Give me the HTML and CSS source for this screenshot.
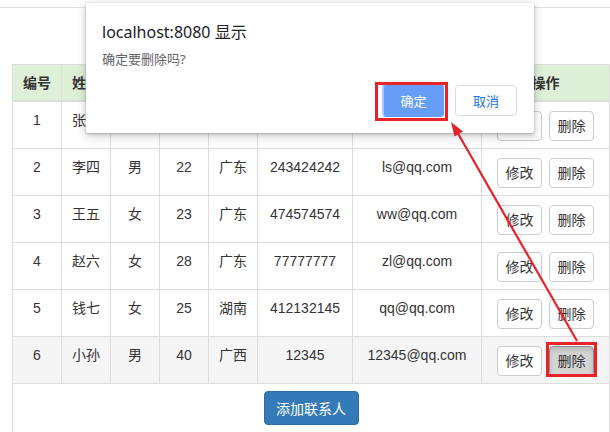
FILE: index.html
```html
<!DOCTYPE html>
<html lang="zh">
<head>
<meta charset="utf-8">
<title>联系人列表</title>
<link rel="stylesheet" href="styles.css">
</head>
<body>
<div class="topbar"></div>
<div class="container">
  <table class="grid">
    <colgroup>
      <col class="c-s"><col class="c-s"><col class="c-s"><col class="c-s"><col class="c-s">
      <col class="c-tel"><col class="c-mail"><col class="c-op">
    </colgroup>
    <thead>
      <tr><th>编号</th><th>姓名</th><th>性别</th><th>年龄</th><th>籍贯</th><th>QQ</th><th>邮箱</th><th class="th-op">操作</th></tr>
    </thead>
    <tbody>
      <tr><td>1</td><td>张三</td><td>男</td><td>20</td><td>广东</td><td>123456789</td><td>zs@qq.com</td>
        <td class="op"><div class="ops"><button class="btn">修改</button><button class="btn">删除</button></div></td></tr>
      <tr><td>2</td><td>李四</td><td>男</td><td>22</td><td>广东</td><td>243424242</td><td>ls@qq.com</td>
        <td class="op"><div class="ops"><button class="btn">修改</button><button class="btn">删除</button></div></td></tr>
      <tr><td>3</td><td>王五</td><td>女</td><td>23</td><td>广东</td><td>474574574</td><td>ww@qq.com</td>
        <td class="op"><div class="ops"><button class="btn">修改</button><button class="btn">删除</button></div></td></tr>
      <tr><td>4</td><td>赵六</td><td>女</td><td>28</td><td>广东</td><td>77777777</td><td>zl@qq.com</td>
        <td class="op"><div class="ops"><button class="btn">修改</button><button class="btn">删除</button></div></td></tr>
      <tr><td>5</td><td>钱七</td><td>女</td><td>25</td><td>湖南</td><td>412132145</td><td>qq@qq.com</td>
        <td class="op"><div class="ops"><button class="btn">修改</button><button class="btn">删除</button></div></td></tr>
      <tr class="hover"><td>6</td><td>小孙</td><td>男</td><td>40</td><td>广西</td><td>12345</td><td>12345@qq.com</td>
        <td class="op"><div class="ops"><button class="btn">修改</button><button class="btn active">删除</button></div></td></tr>
      <tr><td colspan="8" class="foot"><button class="btn-primary">添加联系人</button></td></tr>
    </tbody>
  </table>
</div>

<div class="dialog">
  <div class="d-title">localhost:8080 显示</div>
  <div class="d-msg">确定要删除吗?</div>
  <div class="d-actions">
    <button class="d-ok">确定</button>
    <button class="d-cancel">取消</button>
  </div>
</div>

<div class="mark mark-ok"></div>
<div class="mark mark-del"></div>

<svg class="arrow" width="610" height="432" viewBox="0 0 610 432">
  <line x1="577" y1="341" x2="456" y2="130" stroke="#e8222b" stroke-width="2.2"/>
  <polygon points="451,122 463,131.5 454.5,136.5" fill="#e8222b"/>
</svg>
</body>
</html>
```

FILE: styles.css
```css
* { box-sizing: border-box; }
html, body { margin: 0; padding: 0; background: #fff; }
body {
  width: 610px;
  height: 432px;
  overflow: hidden;
  font-family: "Liberation Sans", "Noto Sans CJK SC", sans-serif;
  font-size: 14px;
  line-height: 20px;
  color: #333;
  position: relative;
}
.topbar {
  height: 8px;
  border-bottom: 1px solid #e3e3e3;
}
.container {
  padding: 56px 0 0 12px;
}
.grid {
  border-collapse: collapse;
  table-layout: fixed;
  width: 597px;
}
.c-s { width: 49px; }
.c-tel { width: 95px; }
.c-mail { width: 129px; }
.c-op { width: 128px; }
.grid th, .grid td {
  border: 1px solid #ddd;
  padding: 8px;
  text-align: center;
  vertical-align: top;
  white-space: nowrap;
}
.grid th {
  background: #dff0d8;
  font-weight: bold;
  border-bottom-width: 2px;
  padding: 8px 8px 7px;
}
.grid tr.hover td { background: #f5f5f5; }
.grid td.op { padding: 9px 8px 7px 15px; }
.ops { display: flex; gap: 7px; }
.btn {
  width: 45px;
  height: 30px;
  padding: 0;
  border: 1px solid #ccc;
  border-radius: 4px;
  background: #fff;
  color: #333;
  font-family: inherit;
  font-size: 14px;
  line-height: 20px;
}
.btn.active {
  background: #d4d4d4;
  border-color: #8c8c8c;
  box-shadow: inset 0 3px 5px rgba(0,0,0,.125);
}
.grid td.foot { padding: 7px 8px 8px; }
.btn-primary {
  width: 95px;
  height: 34px;
  border: 1px solid #2e6da4;
  border-radius: 4px;
  background: #337ab7;
  color: #fff;
  font-family: inherit;
  font-size: 14px;
  padding: 0;
}

.dialog {
  position: absolute;
  left: 86px;
  top: 3px;
  width: 448px;
  height: 130px;
  background: #fff;
  border-radius: 2px;
  box-shadow: 0 1px 3px rgba(60,64,67,.35), 0 3px 8px 2px rgba(60,64,67,.18);
  padding: 19px 17px 16px 16px;
  font-family: "Noto Sans", "Noto Sans CJK SC", sans-serif;
}
.d-title {
  font-size: 16px;
  line-height: 20px;
  color: #202124;
}
.d-msg {
  margin-top: 8px;
  font-size: 13px;
  line-height: 18px;
  color: #5f6368;
}
.d-actions {
  margin-top: 16px;
  display: flex;
  justify-content: flex-end;
  align-items: center;
  gap: 11px;
}
.d-ok, .d-cancel {
  width: 62px;
  border-radius: 4px;
  font-family: "Noto Sans", "Noto Sans CJK SC", sans-serif;
  font-size: 13px;
  padding: 0;
}
.d-ok {
  height: 33px;
  background: #669df6;
  border: 1px solid #669df6;
  border-left: 2px solid #a9c8fa;
  color: #fff;
}
.d-cancel {
  height: 31px;
  background: #fff;
  border: 1px solid #dadce0;
  color: #1a73e8;
}

.mark {
  position: absolute;
  border: 3px solid #e8222b;
}
.mark-ok { left: 375px; top: 82px; width: 73px; height: 39px; }
.mark-del { left: 546px; top: 342px; width: 51px; height: 35px; }

.arrow {
  position: absolute;
  left: 0;
  top: 0;
  pointer-events: none;
}
```
